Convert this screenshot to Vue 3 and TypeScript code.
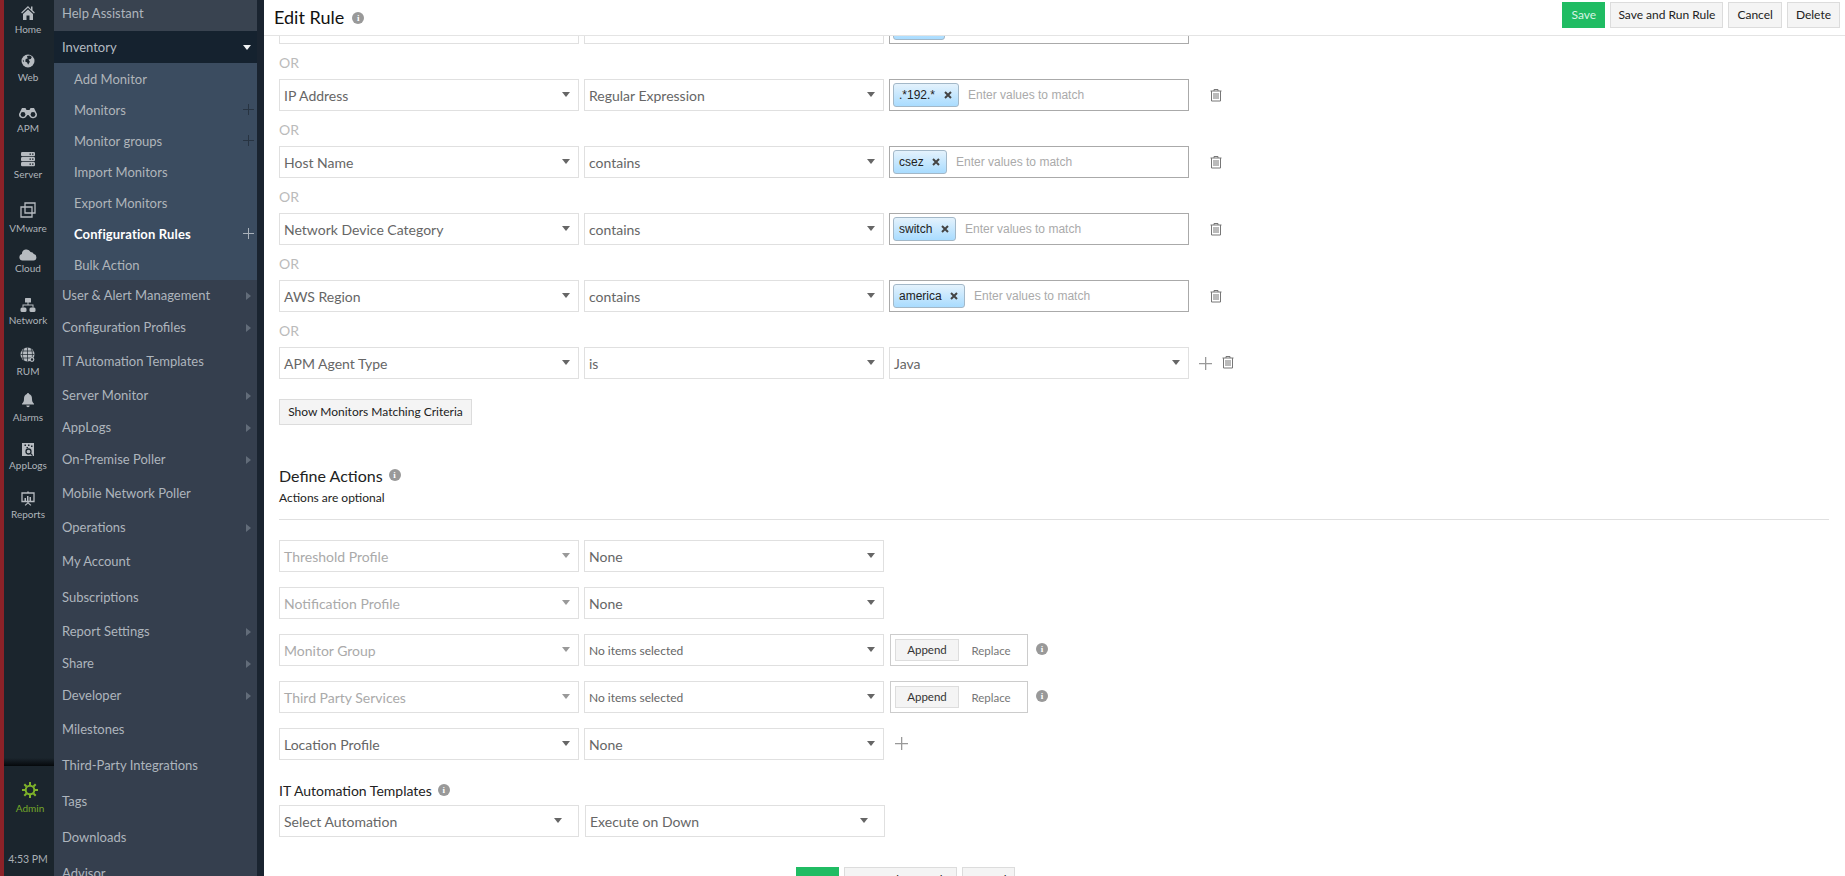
<script setup lang="ts">
interface MenuItem { label: string; arrow?: boolean }
interface RailItem { label: string; icon: string; h: number; gap: number }

const rail: RailItem[] = [
  { label: 'Home', icon: 'home', h: 36, gap: -1 },
  { label: 'Web', icon: 'web', h: 48, gap: -1 },
  { label: 'APM', icon: 'apm', h: 51, gap: -2 },
  { label: 'Server', icon: 'server', h: 46, gap: -2 },
  { label: 'VMware', icon: 'vmware', h: 54, gap: 1 },
  { label: 'Cloud', icon: 'cloud', h: 40, gap: -4 },
  { label: 'Network', icon: 'network', h: 52, gap: -2 },
  { label: 'RUM', icon: 'rum', h: 51, gap: -1 },
  { label: 'Alarms', icon: 'alarm', h: 46, gap: 0 },
  { label: 'AppLogs', icon: 'applogs', h: 48, gap: -2 },
  { label: 'Reports', icon: 'reports', h: 49, gap: -1 },
]

const subItems = [
  { label: 'Add Monitor' },
  { label: 'Monitors', plus: true },
  { label: 'Monitor groups', plus: true },
  { label: 'Import Monitors' },
  { label: 'Export Monitors' },
  { label: 'Configuration Rules', plus: true, active: true },
  { label: 'Bulk Action' },
]

const menuAfter: MenuItem[] = [
  { label: 'User & Alert Management', arrow: true },
  { label: 'Configuration Profiles', arrow: true },
  { label: 'IT Automation Templates' },
  { label: 'Server Monitor', arrow: true },
  { label: 'AppLogs', arrow: true },
  { label: 'On-Premise Poller', arrow: true },
  { label: 'Mobile Network Poller' },
  { label: 'Operations', arrow: true },
  { label: 'My Account' },
  { label: 'Subscriptions' },
  { label: 'Report Settings', arrow: true },
  { label: 'Share', arrow: true },
  { label: 'Developer', arrow: true },
  { label: 'Milestones' },
  { label: 'Third-Party Integrations' },
  { label: 'Tags' },
  { label: 'Downloads' },
  { label: 'Advisor' },
]

const criteria = [
  { field: 'IP Address', op: 'Regular Expression', chip: '.*192.*', chipW: 66 },
  { field: 'Host Name', op: 'contains', chip: 'csez', chipW: 54 },
  { field: 'Network Device Category', op: 'contains', chip: 'switch', chipW: 63 },
  { field: 'AWS Region', op: 'contains', chip: 'america', chipW: 72 },
]

const actions = [
  { field: 'Threshold Profile', value: 'None', off: true },
  { field: 'Notification Profile', value: 'None', off: true },
  { field: 'Monitor Group', value: 'No items selected', off: true, seg: true },
  { field: 'Third Party Services', value: 'No items selected', off: true, seg: true },
  { field: 'Location Profile', value: 'None', plus: true },
]
</script>

<template>
  <div class="page">
    <aside class="rail">
      <div class="rail-top">
        <div v-for="r in rail" :key="r.label" class="rail-item" :style="{ height: r.h + 'px' }">
          <div class="rail-icon" :style="{ marginBottom: r.gap + 'px' }">
            <svg v-if="r.icon === 'home'" width="20" height="20" viewBox="0 0 20 20"><path d="M10 3 3.200 9.500l.8.900L10 4.800l6 5.600.8-.9-2.300-2.200V3.500H13v2.700z" /><path d="M5 11 10 6.400 15 11v6h-3.500v-4.500h-3V17H5z" /></svg>
            <svg v-else-if="r.icon === 'web'" width="20" height="20" viewBox="0 0 20 20"><circle cx="10" cy="10" r="6.500" /><path class="cut" d="M9 5 12 4.500l1.800 1.500-1 2-2.300.4 1.400 2.400-1.800 3-1-2.400-1.900-1 .5-2.400 1.900-.5zM4.800 8.500 6 10l-.9 1.300z" /></svg>
            <svg v-else-if="r.icon === 'apm'" width="20" height="20" viewBox="0 0 20 20"><path d="M4 5h3.500l1 2h3l1-2H16l3 6a4 4 0 0 1-7.500 2.200L10.500 12h-1l-1 1.200A4 4 0 0 1 1 11z" /><circle class="cut" cx="5" cy="11.500" r="2.400" /><circle class="cut" cx="15" cy="11.500" r="2.400" /></svg>
            <svg v-else-if="r.icon === 'server'" width="20" height="20" viewBox="0 0 20 20"><rect x="3" y="3" width="14" height="4.200" rx="1.200" /><rect x="3" y="8" width="14" height="4.200" rx="1.200" /><rect x="3" y="13" width="14" height="4.200" rx="1.200" /><path class="cut" d="M11.500 4.500h1.500v1.200h-1.500zM14 4.500h1.500v1.200H14zM11.500 9.500h1.500v1.200h-1.500zM14 9.500h1.500v1.200H14zM11.500 14.500h1.500v1.200h-1.500zM14 14.500h1.500v1.200H14z" /></svg>
            <svg v-else-if="r.icon === 'vmware'" width="20" height="20" viewBox="0 0 20 20"><path class="line" d="M7 6.500V3h10v10h-3M3 7h11v10H3zM7 7v6h7" /></svg>
            <svg v-else-if="r.icon === 'cloud'" width="20" height="20" viewBox="0 0 20 20"><path d="M4.500 15.500a3.300 3.300 0 0 1-.6-6.500A4.600 4.600 0 0 1 12.600 7a3.500 3.500 0 0 1 3.200 2 3.300 3.300 0 0 1-.3 6.500z" /></svg>
            <svg v-else-if="r.icon === 'network'" width="20" height="20" viewBox="0 0 20 20"><rect x="7" y="3" width="6" height="4.500" rx=".6" /><rect x="2.500" y="12.500" width="6" height="4.500" rx="1.500" /><rect x="11.500" y="12.500" width="6" height="4.500" rx="1.500" /><path d="M9.500 7h1v2.500h5v3h-1v-2h-9v2h-1v-3h5z" /></svg>
            <svg v-else-if="r.icon === 'rum'" width="20" height="20" viewBox="0 0 20 20"><circle cx="9.500" cy="9.500" r="7" /><path class="grid" d="M2.500 9.500h14M3.500 6h12M3.500 13h12M9.500 2.500v14M6 3.500c-2 4-2 8 0 12M13 3.500c2 4 2 8 0 12" /><rect class="cut" x="12" y="12.500" width="6" height="5" /><circle class="ring" cx="14" cy="14.500" r="1.800" /></svg>
            <svg v-else-if="r.icon === 'alarm'" width="20" height="20" viewBox="0 0 20 20"><path d="M10 3a1.100 1.100 0 0 1 1.100 1.100c2 .6 2.900 2.400 2.900 4.700 0 2.700.6 3.700 2 5v.8H4v-.8c1.400-1.300 2-2.300 2-5 0-2.300.9-4.100 2.900-4.700A1.100 1.100 0 0 1 10 3zM8.300 15.500h3.400a1.700 1.700 0 0 1-3.400 0z" /></svg>
            <svg v-else-if="r.icon === 'applogs'" width="20" height="20" viewBox="0 0 20 20"><path d="M4 3h12v13H4z" /><path class="cut" d="M6.500 4.500h1.500V6H6.500zM10 4.500h1.500V6H10zM13 5.500h1.500V7H13zM8.500 7H10v1.200H8.500z" /><circle class="dark" cx="10.500" cy="11.500" r="2.500" /><path class="dark" d="m12.300 13.300 2.300 2.300" /></svg>
            <svg v-else-if="r.icon === 'reports'" width="20" height="20" viewBox="0 0 20 20"><path class="line" d="M4 5h12v8.500H4z" /><path d="M6.500 10h1.500v3H6.500zM9 8h1.500v5H9zM11.500 9H13v4h-1.500zM9.200 3.500h1.600V5H9.200zM9.300 13.500h1.400v1.200l2.600 2.300-.8.800-2.500-2.200L7.500 17.800l-.8-.8 2.600-2.300z" /></svg>
          </div>
          <span class="rail-label">{{ r.label }}</span>
        </div>
      </div>
      <div class="rail-bottom">
        <div class="admin">
          <svg width="18" height="18" viewBox="0 0 18 18"><circle class="gear" cx="9" cy="9" r="4.300" /><path class="gear" d="M9 1v3M9 14v3M1 9h3M14 9h3M3.300 3.300l2.200 2.200M12.500 12.500l2.200 2.200M3.300 14.700l2.200-2.200M12.500 5.500l2.200-2.200" /></svg>
          <span class="admin-label">Admin</span>
        </div>
        <span class="clock">4:53 PM</span>
      </div>
    </aside>

    <nav class="menu">
      <div class="menu-item tall">Help Assistant</div>
      <div class="menu-item short open">
        Inventory
        <i class="tri-down"></i>
      </div>
      <div class="submenu">
        <div v-for="s in subItems" :key="s.label" class="sub-item" :class="{ active: s.active }">
          {{ s.label }}
          <svg v-if="s.plus" class="sub-plus" width="11" height="11" viewBox="0 0 11 11"><path d="M5 0h1v11H5zM0 5h11v1H0z" /></svg>
        </div>
      </div>
      <div v-for="m in menuAfter" :key="m.label" class="menu-item" :class="m.arrow ? 'short' : 'tall'">
        {{ m.label }}
        <i v-if="m.arrow" class="tri-right"></i>
      </div>
    </nav>
    <div class="gutter"></div>

    <main class="main">
      <header class="head">
        <h1 class="title">Edit Rule</h1>
        <span class="info head-info">i</span>
        <div class="head-actions">
          <button class="btn green">Save</button>
          <button class="btn run">Save and Run Rule</button>
          <button class="btn">Cancel</button>
          <button class="btn">Delete</button>
        </div>
      </header>

      <div class="scroll">
        <div class="content">
          <div class="row">
            <div class="select"></div>
            <div class="select"></div>
            <div class="chips"><span class="chip first-chip"></span></div>
          </div>

          <template v-for="c in criteria" :key="c.field">
            <div class="or">OR</div>
            <div class="row">
              <div class="select"><span>{{ c.field }}</span><i class="caret"></i></div>
              <div class="select"><span>{{ c.op }}</span><i class="caret"></i></div>
              <div class="chips">
                <span class="chip" :style="{ width: c.chipW + 'px' }">
                  {{ c.chip }}
                  <svg class="chip-x" width="8" height="8" viewBox="0 0 8 8"><path d="m1 1 6 6M7 1 1 7" /></svg>
                </span>
                <span class="placeholder">Enter values to match</span>
              </div>
              <svg class="trash" width="14" height="14" viewBox="0 0 14 14"><path d="M1.500 3h11M5 3V1.500h4V3M2.500 3v10h9V3M5 5v6M7 5v6M9 5v6" /></svg>
            </div>
          </template>

          <div class="or">OR</div>
          <div class="row">
            <div class="select"><span>APM Agent Type</span><i class="caret"></i></div>
            <div class="select"><span>is</span><i class="caret"></i></div>
            <div class="select"><span>Java</span><i class="caret"></i></div>
            <svg class="plus apm-plus" width="13" height="13" viewBox="0 0 13 13"><path d="M6 0h1.300v13H6zM0 6h13v1.300H0z" /></svg>
            <svg class="trash apm-trash" width="14" height="14" viewBox="0 0 14 14"><path d="M1.500 3h11M5 3V1.500h4V3M2.500 3v10h9V3M5 5v6M7 5v6M9 5v6" /></svg>
          </div>

          <button class="btn show-btn">Show Monitors Matching Criteria</button>

          <div class="section-head">
            <h2 class="section-title">Define Actions</h2>
            <span class="info">i</span>
          </div>
          <p class="section-note">Actions are optional</p>
          <hr class="divider" />

          <div class="actions">
            <div v-for="a in actions" :key="a.field" class="row">
              <div class="select" :class="{ off: a.off }"><span>{{ a.field }}</span><i class="caret"></i></div>
              <div class="select" :class="{ small: a.seg }"><span>{{ a.value }}</span><i class="caret"></i></div>
              <template v-if="a.seg">
                <div class="segment">
                  <span class="seg-on">Append</span>
                  <span class="seg-off">Replace</span>
                </div>
                <span class="info seg-info">i</span>
              </template>
              <svg v-if="a.plus" class="plus loc-plus" width="13" height="13" viewBox="0 0 13 13"><path d="M6 0h1.300v13H6zM0 6h13v1.300H0z" /></svg>
            </div>
          </div>

          <div class="auto-head">
            <h3 class="auto-title">IT Automation Templates</h3>
            <span class="info">i</span>
          </div>
          <div class="row wide-gap">
            <div class="select inset"><span>Select Automation</span><i class="caret"></i></div>
            <div class="select inset"><span>Execute on Down</span><i class="caret"></i></div>
          </div>

          <div class="foot">
            <button class="btn green">Save</button>
            <button class="btn run">Save and Run Rule</button>
            <button class="btn">Cancel</button>
          </div>
        </div>
      </div>
    </main>
  </div>
</template>

<style>
html, body { margin: 0; padding: 0; background: #fff; overflow: hidden; }
</style>

<style scoped>
* { box-sizing: border-box; }
.page {
  display: flex;
  width: 1845px;
  height: 876px;
  overflow: hidden;
  font-family: Lato, "Liberation Sans", sans-serif;
  background: #fff;
  border-left: 4px solid #8c2228;
}
.rail {
  width: 50px;
  flex: none;
  display: flex;
  flex-direction: column;
  background: #1b252d;
}
.rail-top { flex: 1; }
.rail-item {
  display: flex;
  flex-direction: column;
  justify-content: flex-end;
  align-items: center;
  padding-right: 2px;
}
.rail-icon { height: 20px; width: 20px; }
.rail-icon svg { display: block; fill: #b6bbc0; }
.rail-icon .cut { fill: #1b252d; }
.rail-icon .line { fill: none; stroke: #b6bbc0; stroke-width: 1.300; }
.rail-icon .grid { fill: none; stroke: #1b252d; stroke-width: .7; }
.rail-icon .ring { fill: none; stroke: #b6bbc0; stroke-width: 1.200; }
.rail-icon .dark { fill: none; stroke: #1b252d; stroke-width: 1.300; }
.rail-label {
  height: 14px;
  line-height: 14px;
  font-size: 10px;
  color: #aeb4ba;
  white-space: nowrap;
}
.rail-bottom {
  height: 111px;
  flex: none;
  position: relative;
  display: flex;
  flex-direction: column;
  align-items: center;
  border-top: 1px solid #05080b;
}
.rail-bottom::before {
  content: "";
  position: absolute;
  left: 0;
  right: 0;
  top: -8px;
  height: 8px;
  background: linear-gradient(#1b252d, #05080b);
}
.admin {
  margin-top: 15px;
  margin-left: 2px;
  display: flex;
  flex-direction: column;
  align-items: center;
}
.gear { fill: none; stroke: #7fb32a; stroke-width: 2; }
.admin-label { font-size: 10px; line-height: 14px; color: #74a829; margin-top: 2px; }
.clock { margin-top: 37px; margin-right: 2px; font-size: 10.500px; line-height: 14px; color: #a9afb5; }

.menu {
  width: 203px;
  flex: none;
  height: 876px;
  overflow: hidden;
  background: #353f4e;
  color: #aeb5bd;
  font-size: 13px;
}
.menu-item {
  position: relative;
  display: flex;
  align-items: center;
  padding-left: 8px;
  white-space: nowrap;
}
.tall { height: 36px; padding-bottom: 3px; }
.short { height: 32px; padding-bottom: 2px; }
.menu-item:first-child { height: 31px; align-items: flex-end; padding-bottom: 10px; background: #394350; }
.menu-item.open { padding-bottom: 0; background: #15222f; color: #b3bac1; }
.tri-down {
  position: absolute;
  right: 6px;
  top: 14px;
  border-style: solid;
  border-width: 5px 4px 0;
  border-color: #f0f2f4 transparent transparent;
}
.tri-right {
  position: absolute;
  right: 6px;
  top: 50%;
  margin-top: -4px;
  border-style: solid;
  border-width: 4px 0 4px 5px;
  border-color: transparent transparent transparent #626c79;
}
.submenu { background: #3b4c60; }
.sub-item {
  position: relative;
  height: 31px;
  display: flex;
  align-items: center;
  padding-left: 20px;
  color: #b0b5ba;
  white-space: nowrap;
}
.sub-item.active { color: #fff; font-weight: 700; letter-spacing: .15px; }
.sub-plus { position: absolute; right: 3px; top: 10px; fill: #283442; }
.active .sub-plus { fill: #aab2bb; }
.gutter { width: 7px; flex: none; background: #1a2430; }

.main {
  flex: 1;
  min-width: 0;
  height: 876px;
  display: flex;
  flex-direction: column;
}
.head {
  height: 36px;
  flex: none;
  display: flex;
  align-items: flex-start;
  padding: 2px 5px 0 10px;
  border-bottom: 1px solid #e4e4e4;
  background: #fff;
  position: relative;
  z-index: 1;
}
.title {
  margin: 0;
  font-size: 18px;
  font-weight: 400;
  line-height: 31px;
  color: #111;
}
.head-info { margin: 10px 0 0 8px; }
.head-actions { margin-left: auto; display: flex; gap: 5px; }
.btn {
  height: 26px;
  padding: 0 8px;
  border: 1px solid #dcdcdc;
  background: #f4f4f4;
  color: #222;
  font: 400 12px/24px Lato, "Liberation Sans", sans-serif;
  white-space: nowrap;
}
.btn.run { padding: 0 7px; }
.btn.green { width: 43px; padding: 0; background: #20bc63; border-color: #20bc63; color: #d8f5e3; }
.info {
  flex: none;
  display: inline-block;
  width: 12px;
  height: 12px;
  border-radius: 50%;
  background: #999;
  color: #fff;
  font: 700 9px/12px "Liberation Serif", serif;
  text-align: center;
}

.scroll { flex: 1; min-height: 0; overflow: hidden; }
.content { margin-top: -24px; padding: 0 16px 0 15px; }
.row { display: flex; align-items: center; gap: 5px; height: 32px; }
.select {
  position: relative;
  flex: none;
  width: 300px;
  height: 32px;
  border: 1px solid #e0e0e0;
  padding-left: 4px;
  font-size: 14px;
  line-height: 32px;
  color: #666;
  white-space: nowrap;
}
.select.off { color: #aaa; }
.select.small { font-size: 12px; }
.caret {
  position: absolute;
  right: 8px;
  top: 12px;
  border-style: solid;
  border-width: 5px 4px 0;
  border-color: #666 transparent transparent;
}
.select.off .caret { border-top-color: #999; }
.select.inset .caret { right: 16px; }
.chips {
  flex: none;
  width: 300px;
  height: 32px;
  border: 1px solid #aaa;
  padding: 3px;
  display: flex;
  align-items: flex-start;
  gap: 9px;
  font-family: "Liberation Sans", Arial, sans-serif;
  font-size: 12px;
}
.chip {
  position: relative;
  flex: none;
  height: 24px;
  padding-left: 5px;
  line-height: 22px;
  color: #222;
  border: 1px solid #a3b8c8;
  border-radius: 3px;
  background: linear-gradient(#e4f2fc, #a9dcff);
  white-space: nowrap;
}
.first-chip { width: 52px; }
.chip-x {
  position: absolute;
  right: 6px;
  top: 7px;
  fill: none;
  stroke: #444;
  stroke-width: 2;
}
.placeholder { line-height: 24px; color: #aaa; white-space: nowrap; }
.trash { fill: none; stroke: #777; stroke-width: 1; margin-left: 15px; }
.apm-plus { margin-left: 5px; fill: #999; }
.apm-trash { margin-left: 4px; margin-top: -2px; }
.plus { flex: none; fill: #999; }
.loc-plus { margin-left: 6px; margin-top: -2px; }
.or { height: 35px; line-height: 37px; font-size: 14px; color: #bbb; }
.show-btn { display: block; margin-top: 20px; width: 193px; padding: 0; }
.section-head { display: flex; align-items: center; gap: 6px; margin-top: 39px; height: 22px; }
.section-title { margin: 0; font-size: 16px; font-weight: 400; color: #222; }
.section-note { margin: 4px 0 0; font-size: 12px; line-height: 16px; color: #222; }
.divider { margin: 13px 0 0; height: 1px; border: 0; background: #e0e0e0; }
.actions { margin-top: 20px; display: flex; flex-direction: column; gap: 15px; }
.segment {
  flex: none;
  width: 138px;
  height: 32px;
  margin-left: 1px;
  border: 1px solid #ccc;
  padding: 4px;
  display: flex;
  align-items: center;
  font-size: 11.500px;
}
.seg-on {
  width: 64px;
  height: 22px;
  line-height: 20px;
  text-align: center;
  background: #f4f4f4;
  border: 1px solid #ddd;
  color: #333;
}
.seg-off { flex: 1; text-align: center; color: #777; }
.seg-info { margin-left: 3px; margin-top: -3px; }
.auto-head { display: flex; align-items: center; gap: 6px; margin-top: 20px; height: 20px; }
.auto-title { margin: 0; font-size: 14px; font-weight: 400; color: #222; }
.wide-gap { margin-top: 5px; gap: 6px; }
.foot { display: flex; gap: 5px; margin: 30px 0 0 517px; }
</style>
